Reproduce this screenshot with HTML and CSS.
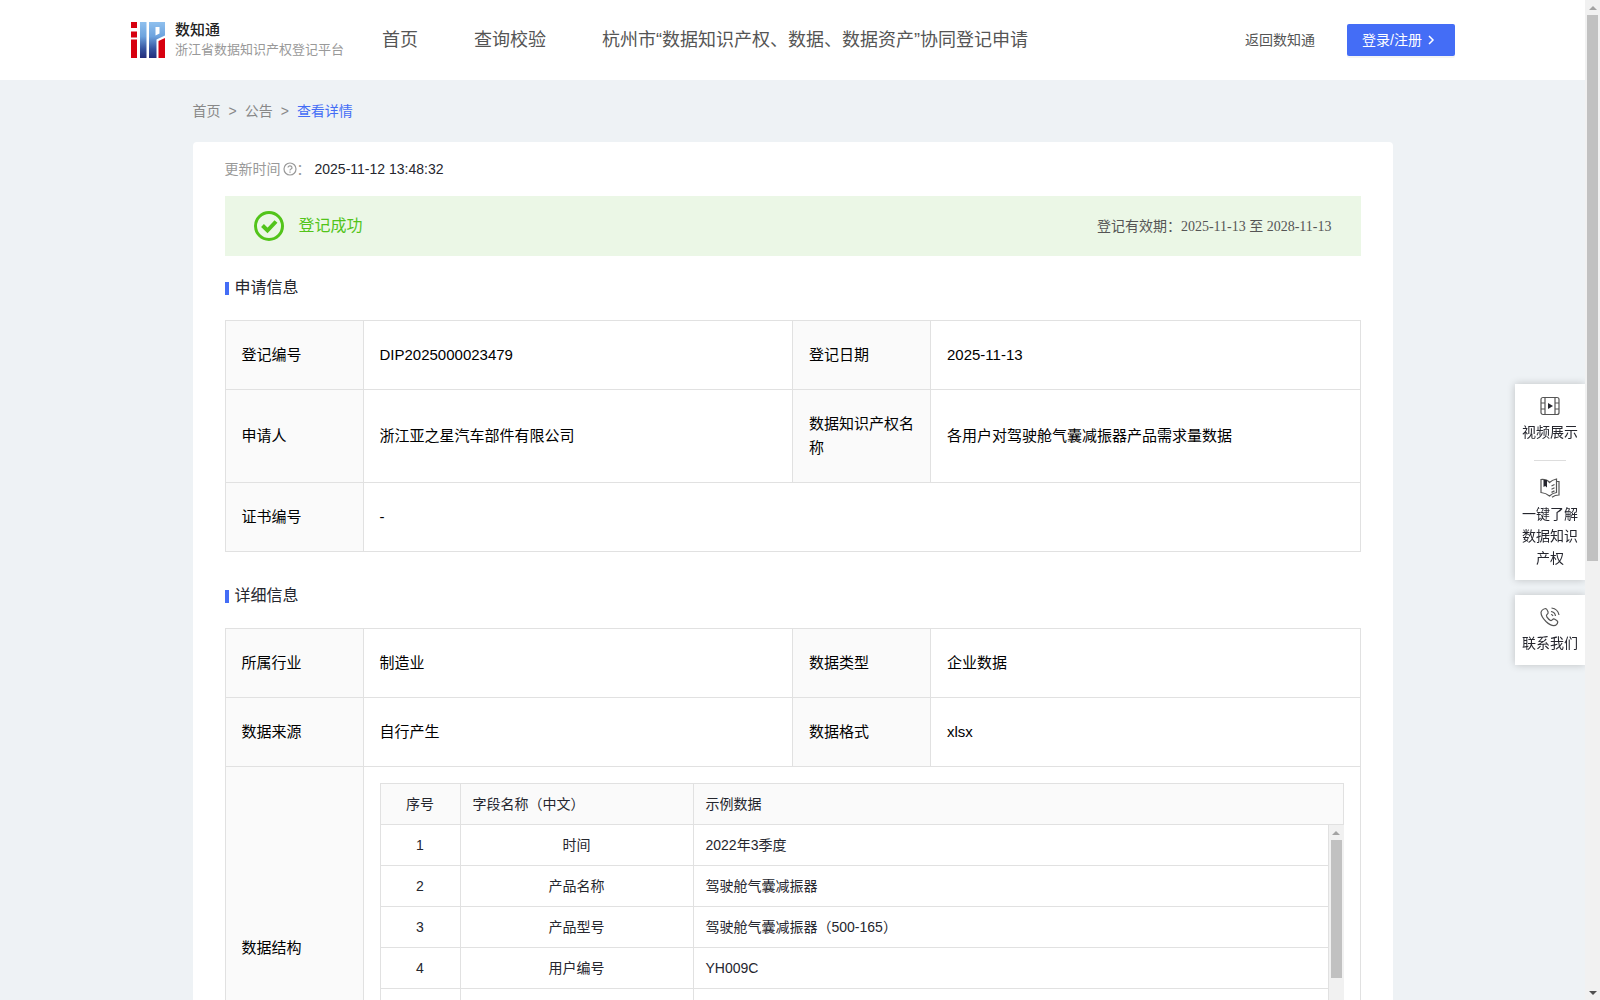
FILE: index.html
```html
<!DOCTYPE html>
<html lang="zh-CN">
<head>
<meta charset="utf-8">
<title>数知通</title>
<meta name="viewport" content="width=device-width, initial-scale=1">
<link rel="stylesheet" href="styles.css">
</head>
<body>
<header class="header">
  <a class="brand" href="#">
    <svg class="brand-logo" viewBox="0 0 34 36" aria-hidden="true">
      <defs>
        <linearGradient id="blue" gradientUnits="userSpaceOnUse" x1="0" y1="0" x2="0" y2="36">
          <stop offset="0" stop-color="#8fc0ee"/>
          <stop offset="0.4" stop-color="#6da3de"/>
          <stop offset="0.75" stop-color="#35539f"/>
          <stop offset="1" stop-color="#232c7a"/>
        </linearGradient>
      </defs>
      <path fill="#d7000f" d="M0 0h6v6H0zM0 9.500h6v6H0zM0 17.500h6v18.500H0zM27.500 19l6.500-3v20h-6.500z"/>
      <path fill="url(#blue)" d="M9 0h6.500v36H9zM18 0h16v13.500l-8.500 4V36H18zM24.500 5v8.500l4-2V5z" fill-rule="evenodd"/>
    </svg>
    <span class="brand-text">
      <strong class="brand-name">数知通</strong>
      <span class="brand-sub">浙江省数据知识产权登记平台</span>
    </span>
  </a>
  <nav class="nav">
    <a href="#">首页</a>
    <a href="#">查询校验</a>
    <a href="#">杭州市“数据知识产权、数据、数据资产”协同登记申请</a>
  </nav>
  <a class="back" href="#">返回数知通</a>
  <button class="login" type="button">登录/注册
    <svg class="login-arrow" viewBox="0 0 10 10" aria-hidden="true"><path d="M3 1l4 4-4 4"/></svg>
  </button>
</header>

<main class="page">
  <nav class="crumbs">
    <a href="#">首页</a><span>&gt;</span><a href="#">公告</a><span>&gt;</span><a class="current" href="#">查看详情</a>
  </nav>

  <article class="card">
    <p class="updated">
      <span class="updated-label">更新时间<svg class="help" viewBox="0 0 14 14" aria-hidden="true"><circle cx="7" cy="7" r="6"/><path d="M5 5.600a2 1.800 0 1 1 2.700 1.700q-.7.300-.7 1.100M7 9.500v1.200"/></svg>：</span>
      <time>2025-11-12 13:48:32</time>
    </p>

    <div class="status">
      <svg class="status-icon" viewBox="0 0 30 30" aria-hidden="true"><circle cx="15" cy="15" r="13.500"/><path class="tick" d="M8.500 14.500l5 5 8.500-9"/></svg>
      <span class="status-text">登记成功</span>
      <span class="validity">登记有效期：<span class="validity-dates">2025-11-13 至 2028-11-13</span></span>
    </div>

    <h2 class="heading">申请信息</h2>
    <table class="info">
      <colgroup><col class="c-label"><col><col class="c-label"><col></colgroup>
      <tr><th scope="row">登记编号</th><td>DIP2025000023479</td><th scope="row">登记日期</th><td>2025-11-13</td></tr>
      <tr><th scope="row">申请人</th><td>浙江亚之星汽车部件有限公司</td><th scope="row">数据知识产权名称</th><td>各用户对驾驶舱气囊减振器产品需求量数据</td></tr>
      <tr><th scope="row">证书编号</th><td colspan="3">-</td></tr>
    </table>

    <h2 class="heading">详细信息</h2>
    <table class="info">
      <colgroup><col class="c-label"><col><col class="c-label"><col></colgroup>
      <tr><th scope="row">所属行业</th><td>制造业</td><th scope="row">数据类型</th><td>企业数据</td></tr>
      <tr><th scope="row">数据来源</th><td>自行产生</td><th scope="row">数据格式</th><td>xlsx</td></tr>
      <tr>
        <th scope="row">数据结构</th>
        <td class="nest" colspan="3">
          <table class="fields">
            <colgroup><col class="c-no"><col class="c-name"><col></colgroup>
            <thead><tr><th scope="col">序号</th><th scope="col">字段名称（中文）</th><th scope="col">示例数据</th></tr></thead>
          </table>
          <div class="fields-body">
            <div class="fields-view">
              <table class="fields">
                <colgroup><col class="c-no"><col class="c-name"><col></colgroup>
                <tbody>
                  <tr><td>1</td><td>时间</td><td>2022年3季度</td></tr>
                  <tr><td>2</td><td>产品名称</td><td>驾驶舱气囊减振器</td></tr>
                  <tr><td>3</td><td>产品型号</td><td>驾驶舱气囊减振器（500-165）</td></tr>
                  <tr><td>4</td><td>用户编号</td><td>YH009C</td></tr>
                  <tr><td></td><td></td><td></td></tr>
                  <tr><td></td><td></td><td></td></tr>
                  <tr><td></td><td></td><td></td></tr>
                </tbody>
              </table>
            </div>
            <div class="bar" aria-hidden="true">
              <span class="bar-up"></span>
              <span class="bar-track"><span class="bar-thumb bar-thumb-fields"></span></span>
              <span class="bar-down"></span>
            </div>
          </div>
        </td>
      </tr>
    </table>
  </article>
</main>

<aside class="side">
  <div class="side-box">
    <a class="side-item" href="#">
      <svg class="side-icon" viewBox="0 0 20 20" aria-hidden="true"><rect x="1" y="1.500" width="18" height="17" rx="2"/><path d="M5 1.500v17M15 1.500v17M1 7h4M1 13h4M15 7h4M15 13h4"/><path class="solid" d="M8 7l5 3-5 3z"/></svg>
      视频展示
    </a>
    <a class="side-item" href="#">
      <svg class="side-icon" viewBox="0 0 20 20" aria-hidden="true"><path d="M1 1.500q5.500-.5 8.500 3Q12 2 16.500 1v13.500q-4 .5-7 3.500-3.500-3-8.500-3.500zM16.500 3.500H19v13.500q-4 0-7 2.300M11.500 8l3-1.500M11.500 11.200l3-1.500M11.500 14.400l3-1.500"/><path class="solid" d="M3.500 2H7v7.500L5.200 8 3.500 9z"/></svg>
      一键了解数据知识产权
    </a>
  </div>
  <div class="side-box">
    <a class="side-item" href="#">
      <svg class="side-icon" viewBox="0 0 20 20" aria-hidden="true"><path d="M5.500 1.500q1.300 0 2.600 3.500.5 1.500-1.300 2.700-.8.800.2 2.500 1.500 2.300 3.500 3.300 1 .4 2-.8 1-1.200 2.300-.5 2.800 1.500 3 2.700-.5 3.600-4 3.800-3.300 0-7.800-4.200Q1 9.500 1 5.500 1.500 2.500 5.500 1.500zM11 4.500q4 .5 4.500 4.500M11.500 1Q18 2 19 8M11 7.500q1.500.2 2 1.500"/></svg>
      联系我们
    </a>
  </div>
</aside>

<div class="bar bar-page" aria-hidden="true">
  <span class="bar-up"></span>
  <span class="bar-track"><span class="bar-thumb bar-thumb-page"></span></span>
  <span class="bar-down bar-active"></span>
</div>
</body>
</html>
```
FILE: styles.css
```css
* { box-sizing: border-box; }

html { scrollbar-width: none; }

body {
  margin: 0;
  padding-right: 15px;
  background: #eef2f5;
  color: #25262e;
  font: 14px/22px "Liberation Sans", "Noto Sans CJK SC", sans-serif;
}

a { color: inherit; text-decoration: none; }

/* Header */
.header {
  display: flex;
  align-items: center;
  height: 80px;
  padding: 0 130px;
  background: #fff;
  color: #555;
}
.brand { display: flex; align-items: center; gap: 9px; margin-right: 38px; flex: none; }
.brand-logo { width: 36px; height: 36px; }
.brand-text { display: flex; flex-direction: column; }
.brand-name { font-size: 15px; line-height: 20px; font-weight: 500; color: #222; }
.brand-sub { font-size: 13px; line-height: 20px; color: #999; }
.nav { display: flex; gap: 56px; font-size: 18px; white-space: nowrap; }
.back { margin-left: auto; margin-right: 32px; white-space: nowrap; }
.login {
  display: flex;
  align-items: center;
  justify-content: center;
  gap: 4px;
  width: 108px;
  height: 32px;
  padding: 0 4px 0 0;
  border: 0;
  border-radius: 2px;
  background: #446df6;
  box-shadow: 0 2px 0 rgba(0, 0, 0, .045);
  color: #fff;
  font: inherit;
  white-space: nowrap;
}
.login-arrow { width: 10px; height: 10px; fill: none; stroke: currentColor; stroke-width: 1.500; }

/* Page body */
.page { max-width: 1200px; margin: 0 auto; padding: 20px 0 600px; }
.crumbs { display: flex; gap: 8px; margin-bottom: 20px; color: #888; }
.crumbs .current { color: #446df6; }

.card { padding: 16px 32px 32px; border-radius: 4px; background: #fff; }
.updated { display: flex; gap: 4px; margin: 0 0 16px; }
.updated-label { display: flex; align-items: center; color: #999; }
.help { width: 14px; height: 14px; margin-left: 2px; fill: none; stroke: currentColor; stroke-width: 1.200; }

.status {
  display: flex;
  align-items: center;
  height: 60px;
  padding: 0 29px;
  background: #ebf7e6;
}
.status-icon { width: 30px; height: 30px; margin-right: 15px; fill: none; stroke: #52c41a; stroke-width: 3; }
.tick { stroke-width: 4; }
.status-text { color: #52c41a; font-size: 16px; }
.validity { margin-left: auto; color: #555; }
.validity-dates { font-family: "Liberation Serif", "Noto Sans CJK SC", serif; }

.heading {
  display: flex;
  align-items: center;
  gap: 6px;
  margin: 20px 0;
  font-size: 16px;
  line-height: 24px;
  font-weight: 400;
}
.heading::before { content: ""; width: 4px; height: 13px; background: #446df6; }

/* Description tables */
table { width: 100%; border-collapse: collapse; table-layout: fixed; }
th { font-weight: 400; text-align: left; }
.info { color: #000; font-size: 15px; line-height: 24px; }
.info + .heading { margin-top: 32px; }
.info th, .info td { padding: 22px 16px; border: 1px solid #e1e1e1; }
.info th { background: #fafafa; }
.c-label { width: 138px; }
.info .nest { padding: 16px; }

/* Field list */
.fields { color: #25262e; font-size: 14px; line-height: 22px; }
.info .fields th, .info .fields td { padding: 9px 12px; }
.info .fields td:empty { height: 41px; }
.info .fields th:first-child, .info .fields td:first-child, .info .fields td:nth-child(2) { text-align: center; }
.info .fields tbody tr:first-child td { border-top: 0; }
.c-no { width: 80px; }
.c-name { width: 233px; }
.fields-body { display: flex; height: 287px; overflow: hidden; }
.fields-view { flex: 1; }

/* Scroll bars */
.bar { display: flex; flex-direction: column; width: 15px; background: #f1f1f1; }
.bar-page { position: fixed; top: 0; right: 0; bottom: 0; }
.bar-track { flex: 1; padding: 0 2px; }
.bar-thumb { display: block; background: #c1c1c1; }
.bar-thumb-page { height: 56.3%; }
.bar-thumb-fields { height: 138px; }
.bar-up, .bar-down { display: flex; align-items: center; justify-content: center; height: 15px; }
.bar-up::before, .bar-down::before { content: ""; border: 4px solid transparent; }
.bar-up::before { border-top: 0; border-bottom-color: #a3a3a3; }
.bar-down::before { border-bottom: 0; border-top-color: #a3a3a3; }
.bar-active::before { border-top-color: #505050; }

/* Floating shortcuts */
.side {
  position: fixed;
  top: 384px;
  right: 15px;
  display: flex;
  flex-direction: column;
  gap: 15px;
  width: 70px;
}
.side-box { padding: 12px 7px 11px; background: #fff; box-shadow: 0 0 8px rgba(0, 0, 0, .2); }
.side-item { display: flex; flex-direction: column; align-items: center; gap: 5px; text-align: center; }
.side-item + .side-item::before { content: ""; width: 32px; height: 1px; margin: 17px 0 12px; background: #ddd; }
.side-icon { width: 20px; height: 20px; fill: none; stroke: #555; stroke-width: 1.200; }
.side-icon .solid { fill: #25262e; stroke: none; }
```
